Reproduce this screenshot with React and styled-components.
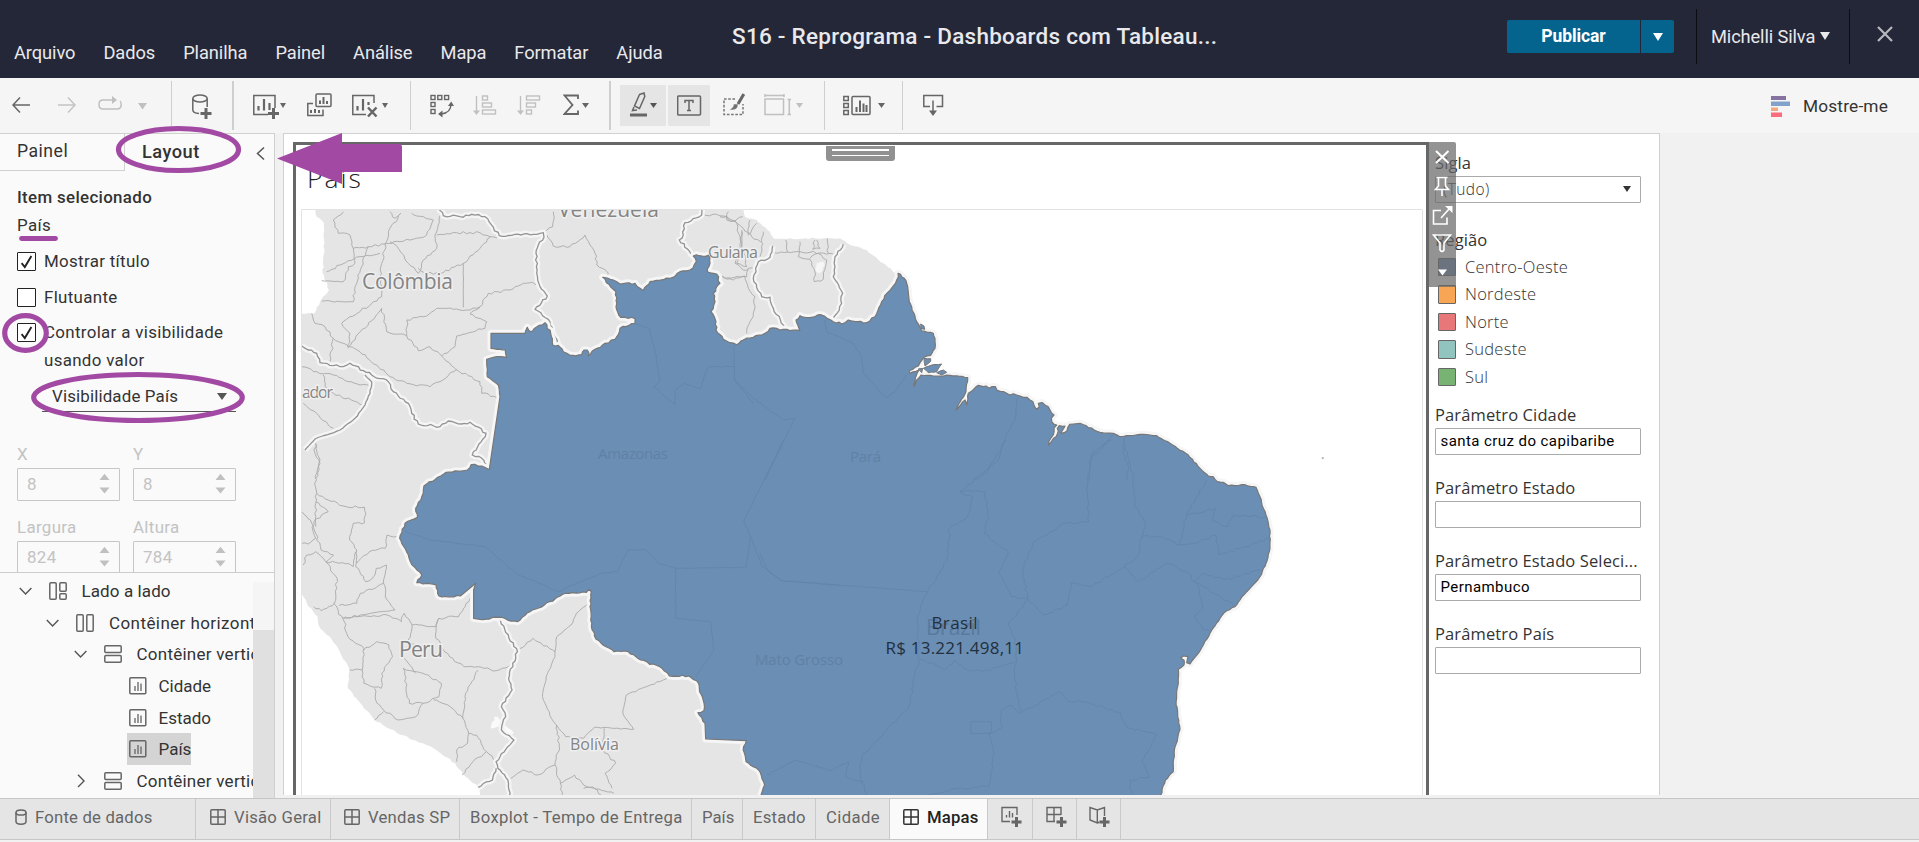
import React from 'react';
import styled, { createGlobalStyle } from 'styled-components';

const UI = `Roboto, "Liberation Sans", sans-serif`;
const BOOK = `"Open Sans", "Noto Sans", sans-serif`;

const Global = createGlobalStyle`
  * { box-sizing: border-box; }
  body { margin: 0; background: #f1f1f1; overflow: hidden; font-family: ${UI}; color: #333; }
  svg { display: block; flex: none; }
`;

/* ---------- shell ---------- */
const Page = styled.div`
  position: relative;
  width: 1919px;
  height: 842px;
  display: flex;
  flex-direction: column;
  overflow: hidden;
  white-space: nowrap;
`;
const Header = styled.header`
  flex: 0 0 78px;
  display: flex;
  background: #242738;
  color: #e9e9ec;
`;
const Menu = styled.nav`
  flex: 0 0 732px;
  display: flex;
  padding-top: 40px;
`;
const MenuItem = styled.span`
  padding: 0 14px;
  font-size: 18.3px;
  line-height: 25px;
  letter-spacing: -0.08px;
`;
const Title = styled.h1`
  flex: 1;
  margin: 0;
  padding-top: 22px;
  font-size: 22.5px;
  line-height: 28px;
  font-weight: 500;
  letter-spacing: 0.26px;
`;
const HeaderRight = styled.div`
  flex: 0 0 412px;
  display: flex;
`;
const Publish = styled.div`
  display: flex;
  margin-top: 20px;
  height: 33px;
  width: 167px;
  gap: 1px;
`;
const PublishMain = styled.div`
  width: 133px;
  background: #05648d;
  border-radius: 2px 0 0 2px;
  color: #fff;
  font-weight: 700;
  font-size: 17.5px;
  line-height: 32px;
  text-align: center;
  letter-spacing: -0.1px;
`;
const PublishDrop = styled.div`
  flex: 1;
  display: flex;
  align-items: center;
  justify-content: center;
  background: #05648d;
  border-radius: 0 2px 2px 0;
`;
const User = styled.div`
  display: flex;
  align-items: center;
  gap: 5px;
  margin: 9px 0 0 22px;
  width: 154px;
  height: 55px;
  padding: 0 0 1px 14px;
  border-left: 1px solid #0c0d13;
  border-right: 1px solid #0c0d13;
  font-size: 18.3px;
  letter-spacing: -0.13px;
`;
const CloseBox = styled.div`
  padding: 25px 0 0 26px;
`;

/* ---------- toolbar ---------- */
const Toolbar = styled.div`
  flex: 0 0 55px;
  display: flex;
  align-items: center;
  background: #f5f5f5;
`;
const Tool = styled.div`
  margin-left: ${p => p.$ml}px;
  width: ${p => p.$w}px;
  height: 28px;
  flex: none;
`;
const ActiveTool = styled.div`
  display: flex;
  align-items: center;
  justify-content: center;
  gap: 2px;
  margin-left: ${p => p.$ml}px;
  width: ${p => p.$w}px;
  height: 41px;
  background: #e5e5e5;
  border-radius: 1px;
`;
const Sep = styled.div`
  margin-left: ${p => p.$ml}px;
  width: ${p => p.$w || 1}px;
  height: 49px;
  background: #cfcfcf;
`;
const ShowMe = styled.div`
  display: flex;
  align-items: center;
  gap: 13px;
  margin-left: auto;
  margin-right: 31px;
  font-size: 17.3px;
  letter-spacing: 0.17px;
`;

/* ---------- body ---------- */
const Body = styled.main`
  flex: 0 0 665px;
  display: flex;
`;
const SidePanel = styled.aside`
  flex: 0 0 275px;
  display: flex;
  flex-direction: column;
  background: #fafafa;
  border-top: 1px solid #d0d0d0;
  border-right: 1px solid #d0d0d0;
`;
const TabRow = styled.div`
  flex: 0 0 37px;
  display: flex;
  font-size: 17.6px;
  line-height: 35px;
  letter-spacing: 0.5px;
`;
const PanelTab = styled.div`
  width: 125px;
  padding-left: 17px;
  border-right: 1px solid #d0d0d0;
  border-bottom: 1px solid #d0d0d0;
`;
const ActiveTab = styled.div`
  width: 131px;
  padding-left: 17px;
  font-size: 18.2px;
  font-weight: 500;
`;
const Form = styled.section`
  flex: 0 0 401px;
  overflow: hidden;
  padding: 14px 0 0 17px;
  font-size: 16.9px;
  letter-spacing: 0.33px;
`;
const Line = styled.div`
  height: 24px;
  line-height: 24px;
  margin-top: ${p => p.$mt || 0}px;
  font-weight: ${p => (p.$strong ? 500 : 400)};
`;
const CheckRow = styled.div`
  display: flex;
  align-items: flex-start;
  gap: 8px;
  margin-top: ${p => p.$mt}px;
  height: ${p => p.$h || 19}px;
`;
const Box = styled.div`
  flex: none;
  width: 19px;
  height: 19px;
  background: #fff;
  border: 1px solid #222;
  border-radius: 1px;
`;
const CheckLabel = styled.div`
  margin-top: -5px;
  line-height: 28px;
`;
const Select = styled.div`
  display: flex;
  align-items: center;
  justify-content: space-between;
  width: 194px;
  height: 30px;
  margin: 8px 0 0 25px;
  padding: 0 9px 1px 10px;
  border-bottom: 1px solid #555;
  letter-spacing: 0.15px;
`;
const Pair = styled.div`
  display: grid;
  grid-template-columns: 103px 103px;
  column-gap: 13px;
  margin-top: ${p => p.$mt}px;
  color: #c3c3c3;
`;
const NumBox = styled.div`
  display: flex;
  align-items: center;
  justify-content: space-between;
  height: 33px;
  margin-top: 2px;
  padding: 0 9px 1px;
  border: 1px solid #c6c6c6;
  border-radius: 1px;
`;
const Tree = styled.section`
  flex: 1;
  display: flex;
  border-top: 1px solid #ccc;
`;
const TreeRows = styled.div`
  flex: 0 0 253px;
  padding-top: 2px;
  overflow: hidden;
`;
const TreeRow = styled.div`
  display: flex;
  align-items: center;
  height: 31.7px;
  padding-left: ${p => p.$indent}px;
  font-size: 17px;
  letter-spacing: ${p => p.$ls || 0}px;
`;
const Twist = styled.div`
  flex: 0 0 30px;
`;
const NodeIcon = styled.div`
  flex: 0 0 ${p => p.$w}px;
`;
const Leaf = styled.div`
  display: flex;
  align-items: center;
  height: 32px;
  padding-left: 2px;
  background: ${p => (p.$on ? '#d4d4d4' : 'transparent')};
`;
const Track = styled.div`
  width: 21px;
  margin-top: 9px;
  padding-top: 48px;
  background: #f5f5f5;
`;
const Thumb = styled.div`
  height: 100%;
  background: #e0e0e0;
`;

/* ---------- canvas ---------- */
const Canvas = styled.section`
  display: flex;
  width: 1377px;
  height: 662px;
  margin-left: 8px;
  padding: 8px 0 0 9px;
  background: #fff;
  border: 1px solid #d0d0d0;
  border-bottom: 0;
  overflow: hidden;
`;
const Sheet = styled.div`
  position: relative;
  flex: 0 0 1136px;
  border: 3px solid #676767;
  border-bottom: 0;
  padding-left: 5px;
`;
const SheetTitle = styled.div`
  height: 64px;
  padding: 18px 0 0 6px;
  font-family: ${BOOK};
  font-weight: 300;
  font-size: 26.5px;
  line-height: 30px;
  letter-spacing: 2px;
  color: #222;
`;
const Handle = styled.div`
  position: absolute;
  left: 530px;
  top: 1px;
  width: 69px;
  height: 15px;
  padding: 3px 6px;
  display: flex;
  flex-direction: column;
  gap: 4px;
  background: #919191;
  border-radius: 0 0 3px 3px;
`;
const Grip = styled.i`
  height: 1.5px;
  background: #fff;
`;
const Strip = styled.div`
  position: absolute;
  left: 1133px;
  top: -3px;
  width: 27px;
  height: 145px;
  background: rgba(105, 105, 105, 0.72);
  border-radius: 0 2px 0 0;
  z-index: 2;
`;
const Params = styled.div`
  width: 212px;
  padding: 8px 0 0 6px;
  font-family: ${BOOK};
  font-size: 16.5px;
`;
const PLabel = styled.div`
  height: 24px;
  line-height: 25px;
  margin-top: ${p => p.$mt || 0}px;
  letter-spacing: 0.12px;
`;
const Field = styled.div`
  display: flex;
  align-items: center;
  justify-content: space-between;
  height: 27px;
  margin-top: 2px;
  padding: 0 9px 1px ${p => p.$pl || 4.5}px;
  background: #fff;
  border: 1px solid #aaa;
  border-radius: 1px;
  color: ${p => p.$color || '#000'};
  font-family: ${p => p.$font || UI};
  font-weight: ${p => p.$weight || 400};
  font-size: ${p => p.$size || 15}px;
  letter-spacing: 0.43px;
`;
const Legend = styled.div`
  margin-top: 2px;
`;
const LegendRow = styled.div`
  display: flex;
  align-items: center;
  gap: 9px;
  height: 27.5px;
  padding-left: 3px;
  font-weight: 300;
  line-height: 24px;
  letter-spacing: 0.27px;
`;
const Swatch = styled.i`
  width: 18px;
  height: 18.5px;
  background: ${p => p.$c};
  border: 1px solid #666;
  border-radius: 1px;
`;

/* ---------- bottom tabs ---------- */
const SheetTabs = styled.footer`
  flex: 0 0 42px;
  display: flex;
  background: #e5e5e5;
  border-top: 1px solid #c6c6c6;
  border-bottom: 1px solid #c6c6c6;
  font-size: 16.7px;
`;
const SheetTab = styled.div`
  display: flex;
  align-items: center;
  width: ${p => p.$w}px;
  padding: 0 0 4px ${p => p.$pl}px;
  gap: 8px;
  border-right: 1px solid #c9c9c9;
  letter-spacing: ${p => p.$ls}px;
  background: ${p => (p.$on ? '#fafafa' : 'transparent')};
  color: ${p => (p.$on ? '#222' : '#666')};
  font-weight: ${p => (p.$on ? 500 : 400)};
`;

const Overlay = styled.svg`
  position: absolute;
  left: 0;
  top: 0;
  pointer-events: none;
  z-index: 5;
`;

/* ---------- icons ---------- */
const Svg = ({ w, h = 28, c = '#666', s = 1.5, children }) => (
  <svg width={w} height={h} viewBox={`0 0 ${w} ${h}`} fill="none" stroke={c} strokeWidth={s}>{children}</svg>
);
const Tri = ({ w = 7, h = 5, c = '#555' }) => (
  <svg width={w} height={h} viewBox="0 0 10 10" preserveAspectRatio="none"><path d="M0 0H10L5 10Z" fill={c} /></svg>
);
const TriTool = ({ ml, w, h = 5, c }) => (
  <Tool $ml={ml} $w={w}><svg width={w} height="28"><path d={`M0 11H${w}L${w / 2} ${11 + h}Z`} fill={c || '#666'} /></svg></Tool>
);
const Plus = ({ x, y, r = 5.5 }) => <path d={`M${x - r} ${y}H${x + r}M${x} ${y - r}V${y + r}`} strokeWidth="3" />;
const GridIcon = ({ c = '#666' }) => (
  <Svg w={16} h={16} c={c}><rect x="0.8" y="0.8" width="14.4" height="14.4" rx="1" /><path d="M8 1V15M1 8H15" /></Svg>
);
const LeafIcon = () => (
  <Svg w={18} h={18}><rect x="0.8" y="0.8" width="16" height="16" rx="1" /><path d="M6 14V9M9 14V5M12 14V6.5" strokeWidth="1.3" /></Svg>
);
const RowsIcon = () => (
  <Svg w={18} h={18}><rect x="0.8" y="0.8" width="16.4" height="6.6" rx="1" /><rect x="0.8" y="10.6" width="16.4" height="6.6" rx="1" /></Svg>
);
const ColsIcon = () => (
  <Svg w={18} h={18}><rect x="0.8" y="0.8" width="6.4" height="16.4" rx="1" /><rect x="10.8" y="0.8" width="6.4" height="16.4" rx="1" /></Svg>
);
const TiledIcon = () => (
  <Svg w={18} h={18}><rect x="0.8" y="0.8" width="6.4" height="16.4" rx="1" /><rect x="10.8" y="0.8" width="6.4" height="8.4" rx="1" /><rect x="10.8" y="11.8" width="6.4" height="5.4" rx="1" /></Svg>
);
const Chevron = ({ open }) => (
  <Svg w={14} h={14} s={1.4} c="#555"><path d={open ? 'M0.8 4L6.6 10L12.4 4' : 'M4 0.8L10 7L4 13'} /></Svg>
);
const CheckMark = () => (
  <svg width="17" height="17" viewBox="0 0 17 17" fill="none" stroke="#222" strokeWidth="1.9"><path d="M3.6 10.2L6.8 14L13.4 3" /></svg>
);
const Spin = () => (
  <svg width="11" height="21"><path d="M0.5 7H10.5L5.5 0.8Z M0.5 14.5H10.5L5.5 20.5Z" fill="#c0c0c0" /></svg>
);

/* ---------- map geometry ---------- */
const VIEW = {
  A: [280, 120, 3, 3],
  B: [720, 120, 3, 3],
  C: [1160, 400, 3, 3],
  D: [280, 440, 2.8, 3],
  E: [760, 440, 2.8, 3],
};
const pts = (v, s) => {
  const [ox, oy, sx, sy] = VIEW[v];
  return s.trim().split(/\s+/).map(t => {
    const [x, y] = t.split(',').map(Number);
    return [ox + x / sx, oy + y / sy];
  });
};
const noise = (x, y) => {
  const n = Math.sin(x * 12.9898 + y * 78.233) * 43758.5453;
  return n - Math.floor(n) - 0.5;
};
const roughen = (list, amp) => {
  const out = [list[0]];
  for (let i = 1; i < list.length; i++) {
    const [x0, y0] = list[i - 1];
    const [x1, y1] = list[i];
    const len = Math.hypot(x1 - x0, y1 - y0);
    const n = Math.max(1, Math.round(len / 3.2));
    for (let k = 1; k < n; k++) {
      const t = k / n;
      const d = noise(x0 + k, y1 + k) * amp;
      out.push([x0 + (x1 - x0) * t - ((y1 - y0) / len) * d, y0 + (y1 - y0) * t + ((x1 - x0) / len) * d]);
    }
    out.push([x1, y1]);
  }
  return out;
};
const toPath = list => 'M' + list.map(p => `${p[0].toFixed(1)} ${p[1].toFixed(1)}`).join('L');
const line = (v, s, amp = 2.4) => toPath(roughen(pts(v, s), amp));

const WEST_EDGE = pts('A', '628,1048 660,830');
const NORTH = [
  ...pts('A', '660,830 655,795 622,770 620,718 650,710 680,712 676,690 633,685'),
];
const NORTH2 = [
  ...pts('A', '735,640 742,622 750,635 762,626 795,608 812,640 818,675 835,676 850,695 870,706 905,704 912,690 922,690 925,708 945,688 975,670 1005,658 1020,625 1065,610 1065,596 1022,592 1008,560 1008,515 968,472 982,474 1000,480 1020,492 1065,490 1090,512 1110,485 1170,475 1200,455 1230,450 1249,425 1240,408 1285,406 1290,430 1282,455 1310,462 1320,490 1300,520 1305,545 1293,575 1308,605 1308,630 1330,658 1370,674'),
  ...pts('B', '70,660 100,652 135,640 150,625 190,628 240,632 228,600 240,587 270,593 303,584 340,605 365,612 385,600 440,608 465,590 485,545 530,480 534,460 553,475 563,500'),
];
const DELTA = pts('B', '568,545 590,605 605,633 640,640 645,655 645,685 632,706 612,712 595,738 568,752 570,760 597,750 586,775 582,800 590,780 603,765 650,768 690,766 743,773 738,815 708,870 735,840 740,855 745,820 775,796');
const COAST = [
  ...pts('B', '790,800 815,800 860,820 890,825 910,832 930,840 950,868 955,850 975,855 990,870 1002,885 995,905 1010,915 1000,945 985,975 1008,950 1012,925 1035,918 1022,940 1060,912'),
];
const EAST = [
  ...pts('B', '1080,910 1140,937 1180,940 1200,950 1270,943 1310,947 1350,970 1405,1005 1440,1045'),
  ...pts('C', '145,228 160,230 172,245 190,247 205,257 255,254 288,262 300,290 310,325 318,345 330,390 330,445 318,490 300,530 260,575 240,600 225,620 200,632 180,655 150,700 115,760 90,792 80,788 84,770 70,768 62,775 72,780 72,795 55,808 55,850 50,875'),
  ...pts('E', '1165,785 1176,868 1160,930 1157,995 1135,1020 1122,1066 1115,1090'),
];
const SOUTH = [
  ...pts('D', '1340,1090 1357,1035 1340,990 1325,980 1305,965 1297,930 1306,902'),
];
const SOUTH2 = pts('D', '1190,850 1170,818 1187,812 1185,780 1175,755 1172,730 1145,708 1090,708 1070,685 1010,660 975,635 935,635 885,598 872,560 868,500 872,455 865,448 858,457 800,460 740,495 700,515 665,545 610,532 560,538 542,535');
const SOUTH3 = pts('D', '505,468 445,468 437,435 383,428 397,405 365,365 350,325 335,295 350,250 385,232 380,205 397,170 403,138 465,97 525,90 535,74 565,78 584,88');

const BRAZIL = toPath([
  ...WEST_EDGE,
  ...roughen(NORTH, 1.2),
  ...pts('A', '633,640'),
  ...roughen(NORTH2, 2.2),
  ...roughen(DELTA, 1),
  ...roughen(COAST, 4),
  ...roughen(EAST, 1),
  ...roughen(SOUTH, 1.5),
  ...pts('D', '1192,897'),
  ...roughen(SOUTH2, 1.8),
  ...pts('D', '542,450 548,430'),
  ...roughen(SOUTH3, 1.8),
]) + 'Z';

const LAND = toPath(roughen([
  ...pts('A', '104,262 110,290 132,310 132,400 128,460 147,510 120,545 105,578 60,584'),
  ...pts('D', '55,445 75,490 105,530 110,560 140,590 165,630 195,690 190,745 225,790 265,840 340,885 430,925 490,970 520,1010 560,1045 562,1090 1400,1090 1400,200'),
  ...pts('B', '520,600 534,465 490,430 440,390 400,378 360,355 162,356 150,335 110,300 75,290 70,262'),
], 1.5)) + 'Z';

const COUNTRY = [
  line('A', '478,262 490,287 540,290 575,283 615,290 658,347 760,343 790,338 792,352 775,375 768,400 770,460 780,500 802,528 765,568 805,598 820,640 832,672'),
  line('A', '1265,262 1265,285 1215,308 1210,345 1198,360 1240,408'),
  line('A', '65,678 85,690 110,700 120,728 190,740 210,730 275,765 325,785 340,815 385,850 395,880 415,912 480,920 505,903 545,912 570,907 618,940 577,1005 605,1015 625,1045'),
  line('A', '255,765 275,785 270,820 255,855 225,895 180,930 105,957 75,990', 1),
  line('B', '158,378 150,412 115,425 100,475 125,530 150,532 160,565 195,625'),
  line('B', '370,373 345,410 340,470 368,520 358,570 338,602'),
  line('D', '610,535 665,635 640,715 650,750 620,800 632,830 620,870 655,900 605,965 610,985 638,1020 645,1090'),
  line('D', '605,985 595,1020 555,1042'),
];
const STATES = [
  line('A', '190,275 160,300 175,340 210,345 220,385 265,380 325,370 360,365 390,360 440,345 460,300 430,290 395,280'),
  line('A', '330,275 345,295 362,280 325,335 305,430 300,470 305,530 185,610 210,640 205,685'),
  line('A', '220,385 225,430 205,440 190,485 125,482'),
  line('A', '265,380 245,440 225,500 220,545 125,543'),
  line('A', '480,287 465,345 470,385 430,420 415,460 385,430 355,385 330,365'),
  line('A', '470,345 530,338 600,338 630,350 660,350'),
  line('A', '630,352 600,385 550,430 480,460 440,460 415,445'),
  line('A', '550,430 550,562', 0.3),
  line('A', '775,490 730,490 690,510 625,520 600,560 570,570 470,565 430,590 380,600 380,648 320,635 305,565 205,680'),
  line('A', '380,648 415,692 450,680 485,708 525,680 530,648 615,625 620,605 570,582 600,562'),
  line('A', '485,708 530,750 600,785 605,820 660,832'),
  line('A', '95,580 105,610 135,620 160,655 200,675 240,695 290,735 330,770 380,790 450,800 480,785 530,748'),
  line('A', '160,655 150,725'),
  line('A', '140,455 180,435 240,410 300,400'),
  line('A', '65,740 110,755 160,765 240,795 270,798'),
  line('A', '70,850 110,880 160,925'),
  line('A', '130,765 135,800 160,820 250,855'),
  line('A', '820,275 818,320 792,340'),
  line('A', '800,345 820,378 870,380 915,345 930,375 945,400 950,435 985,460 975,475'),
  line('A', '1268,283 1330,288 1370,310 1385,370 1400,440 1370,430 1385,335'),
  line('A', '1315,462 1335,475 1400,470 1405,448'),
  line('A', '105,957 105,1000 120,1030 108,1075'),
  line('B', '0,290 20,290 45,303 70,325 95,350 128,370 120,410'),
  line('B', '65,330 65,380 45,430 70,450 105,445'),
  line('B', '25,275 20,300 45,303 68,290'),
  line('B', '90,300 85,345 95,330 110,310'),
  line('B', '0,470 40,480 75,468 85,505 105,530 100,580 80,640'),
  line('B', '155,398 240,395 330,400 345,405'),
  line('B', '197,360 203,397'),
  line('B', '240,365 235,410 270,418 285,455 283,485 310,478 320,420 295,400 270,415'),
  line('B', '285,360 278,388 300,385 290,360'),
  line('B', '322,355 325,400'),
  line('B', '130,335 125,365'),
  line('D', '95,0 112,60 98,110 103,160 100,190 100,260'),
  line('D', '103,160 135,180 185,200 237,202 237,248 205,250 195,300 215,330 212,380 240,425 262,410 270,385 298,375 290,430 225,460 215,490 165,497'),
  line('D', '100,185 135,215 95,245 90,262'),
  line('D', '62,215 85,240 100,280 115,330 150,345 130,365'),
  line('D', '90,262 100,295 78,312 62,310'),
  line('D', '65,375 75,345 100,335 128,365 160,415 152,490 115,512 95,500'),
  line('D', '128,365 175,368 205,380 212,335'),
  line('D', '215,370 250,335 295,325 300,285 335,295'),
  line('D', '290,430 300,480 322,510 225,525 175,535'),
  line('D', '150,490 180,545 190,590 235,625 230,690 195,690'),
  line('D', '180,535 300,525 340,545 348,520 370,555 435,560 445,535 500,530 540,460'),
  line('D', '370,555 360,610 410,620'),
  line('D', '445,535 435,585 450,620 475,650 515,680 555,680 605,692 650,675'),
  line('D', '235,630 270,605 305,615 315,650 285,700 283,745 235,730 230,690'),
  line('D', '345,685 400,700 452,730 445,770 400,790 362,790 345,685'),
  line('D', '345,645 380,700'),
  line('D', '265,745 268,780 290,810 330,840 380,830 400,790'),
  line('D', '265,840 290,815'),
  line('D', '430,780 470,795 512,835 520,760 555,690'),
  line('D', '512,835 528,880 550,885 578,935 540,965 510,1005'),
  line('D', '528,880 525,910 495,930 495,965'),
  line('D', '578,935 605,965'),
  line('D', '665,635 708,595 770,635'),
  line('D', '865,490 830,520 815,555 775,590 770,650 745,710 735,770 760,835 800,890 850,895 880,862 990,868 960,820 970,765 1090,712', 1.2),
  line('D', '775,855 782,920 770,975 720,1005 680,990 638,1018'),
  line('D', '770,975 785,1030 825,1005 850,1035 935,1060'),
  line('D', '908,865 905,930 940,970 910,1000 930,1045'),
  line('D', '785,1030 790,1066'),
  line('D', '850,1045 880,1045 900,1066'),
];
const INNER = [
  line('A', '1065,610 1108,625 1125,690 1140,785 1120,800 1185,855 1185,810 1215,790 1260,808 1285,740 1363,740 1363,676', 1),
  line('A', '1363,740 1363,780 1420,850', 1),
  line('B', '44,780 100,835 190,900 225,895 135,1080', 0.6),
  line('B', '315,600 320,635 400,670 425,710 430,760 500,835 525,815 560,765', 1),
  line('B', '892,835 885,900 860,940 835,1020 760,1080', 1),
  line('B', '1180,945 1110,1020 1108,1080'),
  line('B', '1215,950 1210,990 1225,1040 1220,1080'),
  line('D', '350,275 420,300 575,320 660,400 780,455 830,430 900,400 945,395 975,330 1025,330 1060,370 1108,385 1108,535 1205,545 1215,630 1165,710', 1),
  line('D', '1108,385 1305,382 1318,290 1298,245 1410,0', 0.6),
  line('D', '1318,290 1350,380 1405,422 1568,437', 0.8),
  line('E', '0,340 20,390 60,422 468,455', 0.8),
  line('E', '690,0 640,90 560,155 595,170 580,230 530,265 525,360 470,455 440,530 445,660 415,805 370,850 285,950 280,1010 300,1064'),
  line('E', '560,152 630,155 640,230 628,280 695,335 668,400 705,470 750,478 735,390 765,310 850,250 920,245 915,150 930,40 985,0'),
  line('E', '1020,10 1045,110 1050,200 1080,250 1070,290 1060,345 1020,380 930,438 870,430 860,495 795,525 750,478 695,555 715,600 715,740 730,820'),
  line('E', '1070,290 1120,290 1175,315 1195,220 1250,120'),
  line('E', '1195,225 1275,205 1265,240 1310,260 1325,225 1415,232'),
  line('E', '1175,315 1230,305 1275,285 1285,345 1360,320 1425,295'),
  line('E', '1020,380 1060,425 1140,370 1200,400 1215,425 1240,400 1300,420 1400,390'),
  line('E', '1215,425 1325,495'),
  line('E', '1225,435 1240,505 1215,530 1240,570 1260,572'),
  line('E', '445,655 520,690 545,660 570,685 625,695 715,665'),
  line('E', '730,820 840,755 865,785 910,785 1010,820 1025,860 1110,885 1070,960 1090,1010 1035,1020 1040,1064'),
  line('E', '590,845 648,845 648,880 590,880 590,845', 0.4),
  line('E', '725,820 700,795 675,815 675,865 640,880 655,945 640,1040 555,1045 470,1064'),
  line('E', '20,1005 100,960 200,992 248,965 240,1012 290,1025', 1.4),
];

const Label = ({ x, y, w, s, children, c = '#848484', halo = true }) => (
  <text x={x} y={y} textLength={w} fontSize={s} fill={c} stroke={halo ? '#efefef' : 'none'} strokeWidth="3" paintOrder="stroke" fontFamily={BOOK} fontWeight="500">{children}</text>
);

const BrazilMap = () => (
  <svg width="1122" height="586" viewBox="301 209 1122 586">
    <rect x="301" y="209" width="1122" height="586" fill="#fff" />
    <path d={LAND} fill="#e5e5e5" />
    <path d={line('D', '600,830 590,865 625,860 640,890 655,880 640,865 625,850 610,830 600,830')} fill="#fafafa" />
    <path d={line('B', '290,430 285,450 300,460 315,435 310,425 290,430')} fill="#f6f6f6" />
    <g fill="none" stroke="#a9a9a9" strokeWidth="0.9">{STATES.map((d, i) => <path key={i} d={d} />)}</g>
    <g fill="none" stroke="#f5f5f5" strokeWidth="6" strokeLinejoin="round">{COUNTRY.map((d, i) => <path key={i} d={d} />)}</g>
    <g fill="none" stroke="#949494" strokeWidth="1.3">{COUNTRY.map((d, i) => <path key={i} d={d} />)}</g>
    <path d={BRAZIL} fill="none" stroke="#f6f6f6" strokeWidth="7" strokeLinejoin="round" />
    <Label x={362} y={288.5} w={91} s={21}>Colômbia</Label>
    <Label x={558} y={217} w={101} s={21}>Venezuela</Label>
    <Label x={708} y={258} w={50} s={16}>Guiana</Label>
    <Label x={302} y={398} w={31} s={16}>ador</Label>
    <Label x={399} y={657} w={44} s={21.5}>Peru</Label>
    <Label x={570} y={750} w={49} s={16}>Bolívia</Label>
    <path d={BRAZIL} fill="#6b8eb4" stroke="#777" strokeWidth="1.2" strokeLinejoin="round" />
    <g fill="#6b8eb4" stroke="#777" strokeWidth="1">
      <path d={line('B', '610,745 635,735 665,732 650,755 625,758 610,745', 0.6)} />
      <path d={line('B', '650,758 670,750 680,757 665,765 650,758', 0.6)} />
      <path d={line('B', '612,715 632,716 632,724 615,738 612,715', 0.6)} />
      <path d={line('B', '602,612 612,618 614,628 603,626 602,612', 0.6)} />
      <path d={line('B', '595,747 608,745 605,758 595,747', 0.6)} />
      <path d="M1322 457.6h1.4v1h-1.4z" fill="#999" stroke="#aaa" strokeWidth="0.6" />
    </g>
    <g fill="none" stroke="#6284a9" strokeWidth="0.8">{INNER.map((d, i) => <path key={i} d={d} />)}</g>
    <Label x={598} y={459} w={70} s={15} c="#6081a6" halo={false}>Amazonas</Label>
    <Label x={850} y={462} w={31} s={15} c="#6081a6" halo={false}>Pará</Label>
    <Label x={755} y={664.5} w={88} s={15} c="#6081a6" halo={false}>Mato Grosso</Label>
    <Label x={926} y={634.7} w={55} s={22} c="#5a7a9d" halo={false}>Brazil</Label>
    <g fontFamily={BOOK} fontSize="17" fill="#22303e">
      <text x="931.5" y="628.5" textLength="46">Brasil</text>
      <text x="885.5" y="653.5" textLength="138.5">R$ 13.221.498,11</text>
    </g>
    <path d="M301.5 795V209.5H1422.5V795" fill="none" stroke="#e3e3e3" />
  </svg>
);

const MENU = ['Arquivo', 'Dados', 'Planilha', 'Painel', 'Análise', 'Mapa', 'Formatar', 'Ajuda'];
const TREE = [
  { t: 'Lado a lado', d: 0, icon: <TiledIcon />, open: true, ls: 0.1 },
  { t: 'Contêiner horizontal', d: 1, icon: <ColsIcon />, open: true, ls: 0.42 },
  { t: 'Contêiner vertical', d: 2, icon: <RowsIcon />, open: true, ls: 0.25 },
  { t: 'Cidade', leaf: true },
  { t: 'Estado', leaf: true },
  { t: 'País', leaf: true, on: true },
  { t: 'Contêiner vertical', d: 2, icon: <RowsIcon />, open: false, ls: 0.25 },
];
const REGIONS = [['Centro-Oeste', '#6b8eb4'], ['Nordeste', '#f8a555'], ['Norte', '#e77778'], ['Sudeste', '#91c3bf'], ['Sul', '#78b374']];
const PARAMS = [['Parâmetro Cidade', 'santa cruz do capibaribe'], ['Parâmetro Estado', ''], ['Parâmetro Estado Seleci...', 'Pernambuco'], ['Parâmetro País', '']];

const ToolbarView = () => (
  <Toolbar>
    <Tool $ml={12} $w={18}><Svg w={18}><path d="M18 13H1M8 5.5L1 13L8 20.5" /></Svg></Tool>
    <Tool $ml={28} $w={18}><Svg w={18} c="#c4c4c4"><path d="M0 13H17M10 5.5L17 13L10 20.5" /></Svg></Tool>
    <Tool $ml={22} $w={24}><Svg w={24} c="#c0c0c0"><path d="M18 8H5Q1 8 1 12.5T5 17H19Q23.200 17 23.200 12.500Q23.200 10 22 9" /><path d="M14 4L19 8L14 12Z" fill="#c0c0c0" stroke="none" /></Svg></Tool>
    <TriTool ml={16} w={9} h={6.5} c="#c0c0c0" />
    <Sep $ml={24} />
    <Tool $ml={20} $w={20}><Svg w={20}><ellipse cx="8" cy="6.500" rx="7.200" ry="3.500" /><path d="M0.800 6.500V18Q1 21 7 21.600M15.200 6.500V15" /><Plus x={14} y={21.500} /></Svg></Tool>
    <Sep $ml={20} $w={2} />
    <Tool $ml={19} $w={27}><Svg w={27}><path d="M22 16V3.500H0.800V22.500H15" /><path d="M5.500 18.500V14M11 18.500V7M16.500 18V11" strokeWidth="2.200" /><Plus x={20.500} y={21.500} /></Svg></Tool>
    <TriTool ml={0} w={6} />
    <Tool $ml={21} $w={25}><Svg w={25}><rect x="9" y="2" width="15" height="12.500" rx="1" /><path d="M13 12V8.500M16.500 12V5M20 12V9" strokeWidth="2" /><path d="M6 11.500H0.800V23.500H16V17.500" /><path d="M4 21V18M8 21V17M12 21V18" strokeWidth="2" /></Svg></Tool>
    <Tool $ml={20} $w={27}><Svg w={27}><path d="M22 11V3.500H0.800V22.500H14" /><path d="M5.500 18.500V14M11 18.500V7M16.500 13V10" strokeWidth="2.200" /><path d="M16 15.500L24.500 24.500M24.500 15.500L16 24.500" strokeWidth="2.500" /></Svg></Tool>
    <TriTool ml={3} w={6} />
    <Sep $ml={22} />
    <Tool $ml={19} $w={24}><Svg w={24} s={1.4}><rect x="1" y="3.500" width="4" height="4" /><rect x="7.800" y="3.500" width="4" height="4" /><rect x="14.600" y="3.500" width="4" height="4" /><rect x="1" y="10.500" width="4" height="4" /><rect x="1" y="17.500" width="4" height="4" /><path d="M21 12Q21 21 11 22" /><path d="M18 14L21.200 9.500L24 14Z M12.500 18.500L8 22L12.500 25.500Z" fill="#666" stroke="none" /></Svg></Tool>
    <Tool $ml={19} $w={24}><Svg w={24} c="#c0c0c0" s={1.4}><path d="M3.500 4V21" /><path d="M0 18.500H7L3.500 23Z" fill="#c0c0c0" stroke="none" /><rect x="9.500" y="4" width="5" height="4" /><rect x="9.500" y="11" width="9" height="4" /><rect x="9.500" y="18" width="13" height="4" /></Svg></Tool>
    <Tool $ml={20} $w={24}><Svg w={24} c="#c0c0c0" s={1.4}><path d="M3.500 4V21" /><path d="M0 18.500H7L3.500 23Z" fill="#c0c0c0" stroke="none" /><rect x="9.500" y="4" width="13" height="4" /><rect x="9.500" y="11" width="9" height="4" /><rect x="9.500" y="18" width="5" height="4" /></Svg></Tool>
    <Tool $ml={22} $w={16}><Svg w={16} s={1.8}><path d="M15 7V3.500H1.500L9.500 13L1.500 22H15V18.500" /></Svg></Tool>
    <TriTool ml={3} w={7} />
    <Sep $ml={20} $w={2} />
    <ActiveTool $ml={9} $w={46}>
      <Svg w={18}><path d="M9.500 2.500L14 1L14.800 4.500L9.500 16.500L4.500 14Z" /><path d="M4 15L2.500 18.500L7 18" /><path d="M0 23H17" strokeWidth="3" /></Svg>
      <Tri w={7} h={5} />
    </ActiveTool>
    <ActiveTool $ml={2} $w={42}>
      <Svg w={25}><rect x="0.700" y="4" width="22.800" height="19" rx="1" /><path d="M8 11V8.500H16V11M12 8.500V18.500M10 18.500H14" /></Svg>
    </ActiveTool>
    <Tool $ml={13} $w={22}><Svg w={22} c="#777"><path d="M12 7H1V22.500H20V12" strokeDasharray="2.600 1.600" /><path d="M20.800 2L15 12" stroke="#666" strokeWidth="3" /><path d="M14 13Q14 17 9 17Q11.500 15 11.500 13Z" fill="#666" /></Svg></Tool>
    <Tool $ml={19} $w={28}><Svg w={28} c="#c0c0c0"><rect x="1" y="7" width="18.500" height="15.500" /><path d="M1 2V5M20 2V5M1 3.500H20M23.500 7.500H27M23.500 22.500H27M25.300 7.500V22.500" /></Svg></Tool>
    <TriTool ml={4} w={7} c="#c0c0c0" />
    <Sep $ml={21} />
    <Tool $ml={18} $w={28}><Svg w={28}><rect x="0.800" y="4.500" width="4.500" height="4" /><rect x="0.800" y="11.500" width="4.500" height="4" /><rect x="0.800" y="18.500" width="4.500" height="4" /><rect x="9" y="4.500" width="18" height="18" rx="1" /><path d="M13.500 20V15M17 20V8.500M20.500 20V11.500M23.500 20V13" strokeWidth="2" /></Svg></Tool>
    <TriTool ml={7} w={7} />
    <Sep $ml={17} />
    <Tool $ml={20} $w={21}><Svg w={21}><path d="M7 14.500H0.800V3.500H19.500V14.500H13.500M10 8.500V20" /><path d="M6 18.500H14L10 24Z" fill="#666" stroke="none" /></Svg></Tool>
    <ShowMe>
      <svg width="19" height="22"><path d="M0 1H15V5H0Z" fill="#8673a0" /><path d="M0 6.500H19V11H0Z" fill="#82a2cc" /><path d="M0 12.500H7V16H0Z" fill="#f5a880" /><path d="M0 17.500H11V22H0Z" fill="#fb6d7c" /></svg>
      Mostre-me
    </ShowMe>
  </Toolbar>
);

export default function App() {
  return (
    <Page>
      <Global />
      <Header>
        <Menu>{MENU.map(t => <MenuItem key={t}>{t}</MenuItem>)}</Menu>
        <Title>S16 - Reprograma - Dashboards com Tableau...</Title>
        <HeaderRight>
          <Publish>
            <PublishMain>Publicar</PublishMain>
            <PublishDrop><Tri w={10} h={8} c="#fff" /></PublishDrop>
          </Publish>
          <User>Michelli Silva <Tri w={10} h={8} c="#e9e9ec" /></User>
          <CloseBox><Svg w={18} h={18} c="#b8b8bd" s={2.2}><path d="M2 2L16 16M16 2L2 16" /></Svg></CloseBox>
        </HeaderRight>
      </Header>
      <ToolbarView />
      <Body>
        <SidePanel>
          <TabRow>
            <PanelTab>Painel</PanelTab>
            <ActiveTab>Layout</ActiveTab>
            <Svg w={9} h={37} c="#555"><path d="M8 13.500L1.500 19.500L8 25.500" /></Svg>
          </TabRow>
          <Form>
            <Line $strong>Item selecionado</Line>
            <Line $mt={4}>País</Line>
            <CheckRow $mt={15}><Box><CheckMark /></Box><CheckLabel>Mostrar título</CheckLabel></CheckRow>
            <CheckRow $mt={17}><Box /><CheckLabel>Flutuante</CheckLabel></CheckRow>
            <CheckRow $mt={16} $h={51}><Box><CheckMark /></Box><CheckLabel>Controlar a visibilidade<br />usando valor</CheckLabel></CheckRow>
            <Select>Visibilidade País <Tri w={10} h={7} /></Select>
            <Pair $mt={29.5}>
              <Line>X</Line><Line>Y</Line>
              <NumBox>8<Spin /></NumBox><NumBox>8<Spin /></NumBox>
            </Pair>
            <Pair $mt={14}>
              <Line>Largura</Line><Line>Altura</Line>
              <NumBox>824<Spin /></NumBox><NumBox>784<Spin /></NumBox>
            </Pair>
          </Form>
          <Tree>
            <TreeRows>
              {TREE.map((n, i) => n.leaf ? (
                <TreeRow key={i} $indent={127}>
                  <Leaf $on={n.on}><NodeIcon $w={29.5}><LeafIcon /></NodeIcon>{n.t}</Leaf>
                </TreeRow>
              ) : (
                <TreeRow key={i} $indent={18.5 + n.d * 27.5} $ls={n.ls}>
                  <Twist><Chevron open={n.open} /></Twist><NodeIcon $w={33}>{n.icon}</NodeIcon>{n.t}
                </TreeRow>
              ))}
            </TreeRows>
            <Track><Thumb /></Track>
          </Tree>
        </SidePanel>
        <Canvas>
          <Sheet>
            <SheetTitle>País</SheetTitle>
            <BrazilMap />
            <Handle><Grip /><Grip /></Handle>
            <Strip>
              <svg width="27" height="145" fill="none" stroke="#fff" strokeWidth="1.6">
                <path d="M7 9L19.500 21M19.500 9L7 21" strokeWidth="2" />
                <path d="M7.500 35.500H18.500M9.500 35.500V44L6.500 47.500H19.500L16.500 44V35.500M13 47.500V54" />
                <path d="M12 68.500H4.500V82H18V75.500M12 76L20.500 66.500" />
                <path d="M16 64H23.500V71Z" fill="#fff" stroke="none" />
                <path d="M4.500 93H21.500L15 101V108Q13 111 11 108V101Z" />
                <path d="M9 127.500H18L13.500 133.500Z" fill="#fff" stroke="none" />
              </svg>
            </Strip>
          </Sheet>
          <Params>
            <PLabel>Sigla</PLabel>
            <Field $pl={7} $font={BOOK} $weight={300} $size={15.5} $color="#333">(Tudo)<Tri w={8} h={6} c="#333" /></Field>
            <PLabel $mt={24}>Região</PLabel>
            <Legend>
              {REGIONS.map(([t, c]) => <LegendRow key={t}><Swatch $c={c} />{t}</LegendRow>)}
            </Legend>
            {PARAMS.map(([t, v], i) => (
              <React.Fragment key={t}>
                <PLabel $mt={i ? 20 : 11.5}>{t}</PLabel>
                <Field>{v}</Field>
              </React.Fragment>
            ))}
          </Params>
        </Canvas>
      </Body>
      <SheetTabs>
        <SheetTab $w={196} $pl={15} $ls={0.2}><Svg w={12} h={16}><ellipse cx="6" cy="3.500" rx="5" ry="2.600" /><path d="M1 3.500V12.500Q1 15.200 6 15.200T11 12.500V3.500" /></Svg>Fonte de dados</SheetTab>
        <SheetTab $w={135} $pl={14} $ls={0.25}><GridIcon />Visão Geral</SheetTab>
        <SheetTab $w={129} $pl={13} $ls={0.25}><GridIcon />Vendas SP</SheetTab>
        <SheetTab $w={232} $pl={10} $ls={0.33}>Boxplot - Tempo de Entrega</SheetTab>
        <SheetTab $w={51} $pl={10} $ls={0}>País</SheetTab>
        <SheetTab $w={73} $pl={10} $ls={0.2}>Estado</SheetTab>
        <SheetTab $w={74} $pl={10} $ls={0.4}>Cidade</SheetTab>
        <SheetTab $w={98} $pl={13} $ls={0.2} $on><GridIcon c="#333" />Mapas</SheetTab>
        <SheetTab $w={45} $pl={13}><Svg w={22} h={22} s={1.4}><path d="M16 9V1.500H1V15.500H9" /><path d="M5.500 11.500V9M8.500 11.500V5M11.500 11.500V7" /><Plus x={15.500} y={16} r={5} /></Svg></SheetTab>
        <SheetTab $w={44} $pl={13}><Svg w={22} h={22} s={1.4}><path d="M15 9V1.500H1V15.500H9M8 1.500V15.500M1 8.500H15" /><Plus x={15.500} y={16} r={5} /></Svg></SheetTab>
        <SheetTab $w={44} $pl={12}><Svg w={22} h={22} s={1.4}><path d="M15.500 10V1.500L8.300 4L1 1.500V14L8.300 17V4M8.300 17L10.500 16" /><Plus x={15.500} y={16} r={5} /></Svg></SheetTab>
      </SheetTabs>
      <Overlay width="1919" height="842" fill="none" stroke="#a249a4" strokeWidth="5.2">
        <ellipse cx="178.500" cy="149.500" rx="60" ry="21" />
        <ellipse cx="25.500" cy="333" rx="20.800" ry="17.300" />
        <ellipse cx="138" cy="397.500" rx="104.300" ry="23" />
        <path d="M21.500 238.500H55.500" strokeWidth="4.800" strokeLinecap="round" />
        <path d="M277 158.500L342 133V144H400L402 146V172H342V184Z" fill="#a249a4" stroke="none" />
      </Overlay>
    </Page>
  );
}
